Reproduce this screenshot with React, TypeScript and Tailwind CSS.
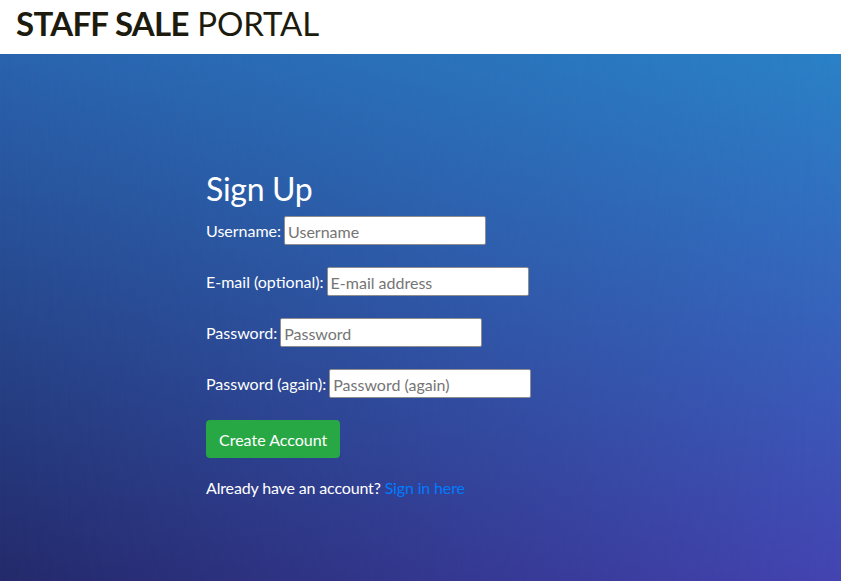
import React from "react";

const font = { fontFamily: "Lato, 'Noto Sans', sans-serif" };

function Row({ label, placeholder, type = "text" }: { label: string; placeholder: string; type?: string }) {
  return (
    <div className="flex items-center h-[29px] mb-[22px]">
      <label className="text-white text-[16px] leading-6 mr-[3px] pt-[1px]">{label}</label>
      <input
        type={type}
        placeholder={placeholder}
        className="w-[202px] h-[29px] bg-white border border-[#8f8f8f] rounded-[2px] px-[3px] pt-[2px] text-[16px] text-[#333] placeholder:text-[#757575] outline-none"
        style={font}
      />
    </div>
  );
}

export default function App() {
  return (
    <div className="w-[841px] h-[581px] flex flex-col overflow-hidden" style={font}>
      <header className="h-[54px] bg-white flex items-center pl-[16px] shrink-0">
        <h1 className="text-[33px] leading-none text-[#1c1b0e] mt-[-8px] whitespace-nowrap">
          <span className="font-bold tracking-[-0.7px]">STAFF SALE</span>{" "}
          <span className="font-normal tracking-[-0.1px]">PORTAL</span>
        </h1>
      </header>
      <main className="relative flex-1 bg-[linear-gradient(to_bottom,#2a63ae,#242a6b)]">
        <div className="absolute inset-0 bg-[linear-gradient(to_bottom,#2a81c6,#4444b1)] [mask-image:linear-gradient(to_right,transparent,black)]" />
        <div className="relative pl-[206px] pt-[116px]">
          <h2 className="text-white text-[32px] leading-[38px] font-normal mb-[8px] tracking-[-0.3px]">Sign Up</h2>
          <form onSubmit={(e) => e.preventDefault()}>
            <Row label="Username:" placeholder="Username" />
            <Row label="E-mail (optional):" placeholder="E-mail address" type="email" />
            <Row label="Password:" placeholder="Password" type="password" />
            <Row label="Password (again):" placeholder="Password (again)" type="password" />
            <button
              type="submit"
              className="h-[38px] px-[13px] bg-[#28a745] text-white text-[16px] rounded-[4px] leading-6 pt-[1px]"
              style={font}
            >
              Create Account
            </button>
          </form>
          <p className="text-white text-[16px] leading-6 mt-[18px] tracking-[-0.15px]">
            Already have an account? <a href="#" className="text-[#007bff]">Sign in here</a>
          </p>
        </div>
      </main>
    </div>
  );
}
